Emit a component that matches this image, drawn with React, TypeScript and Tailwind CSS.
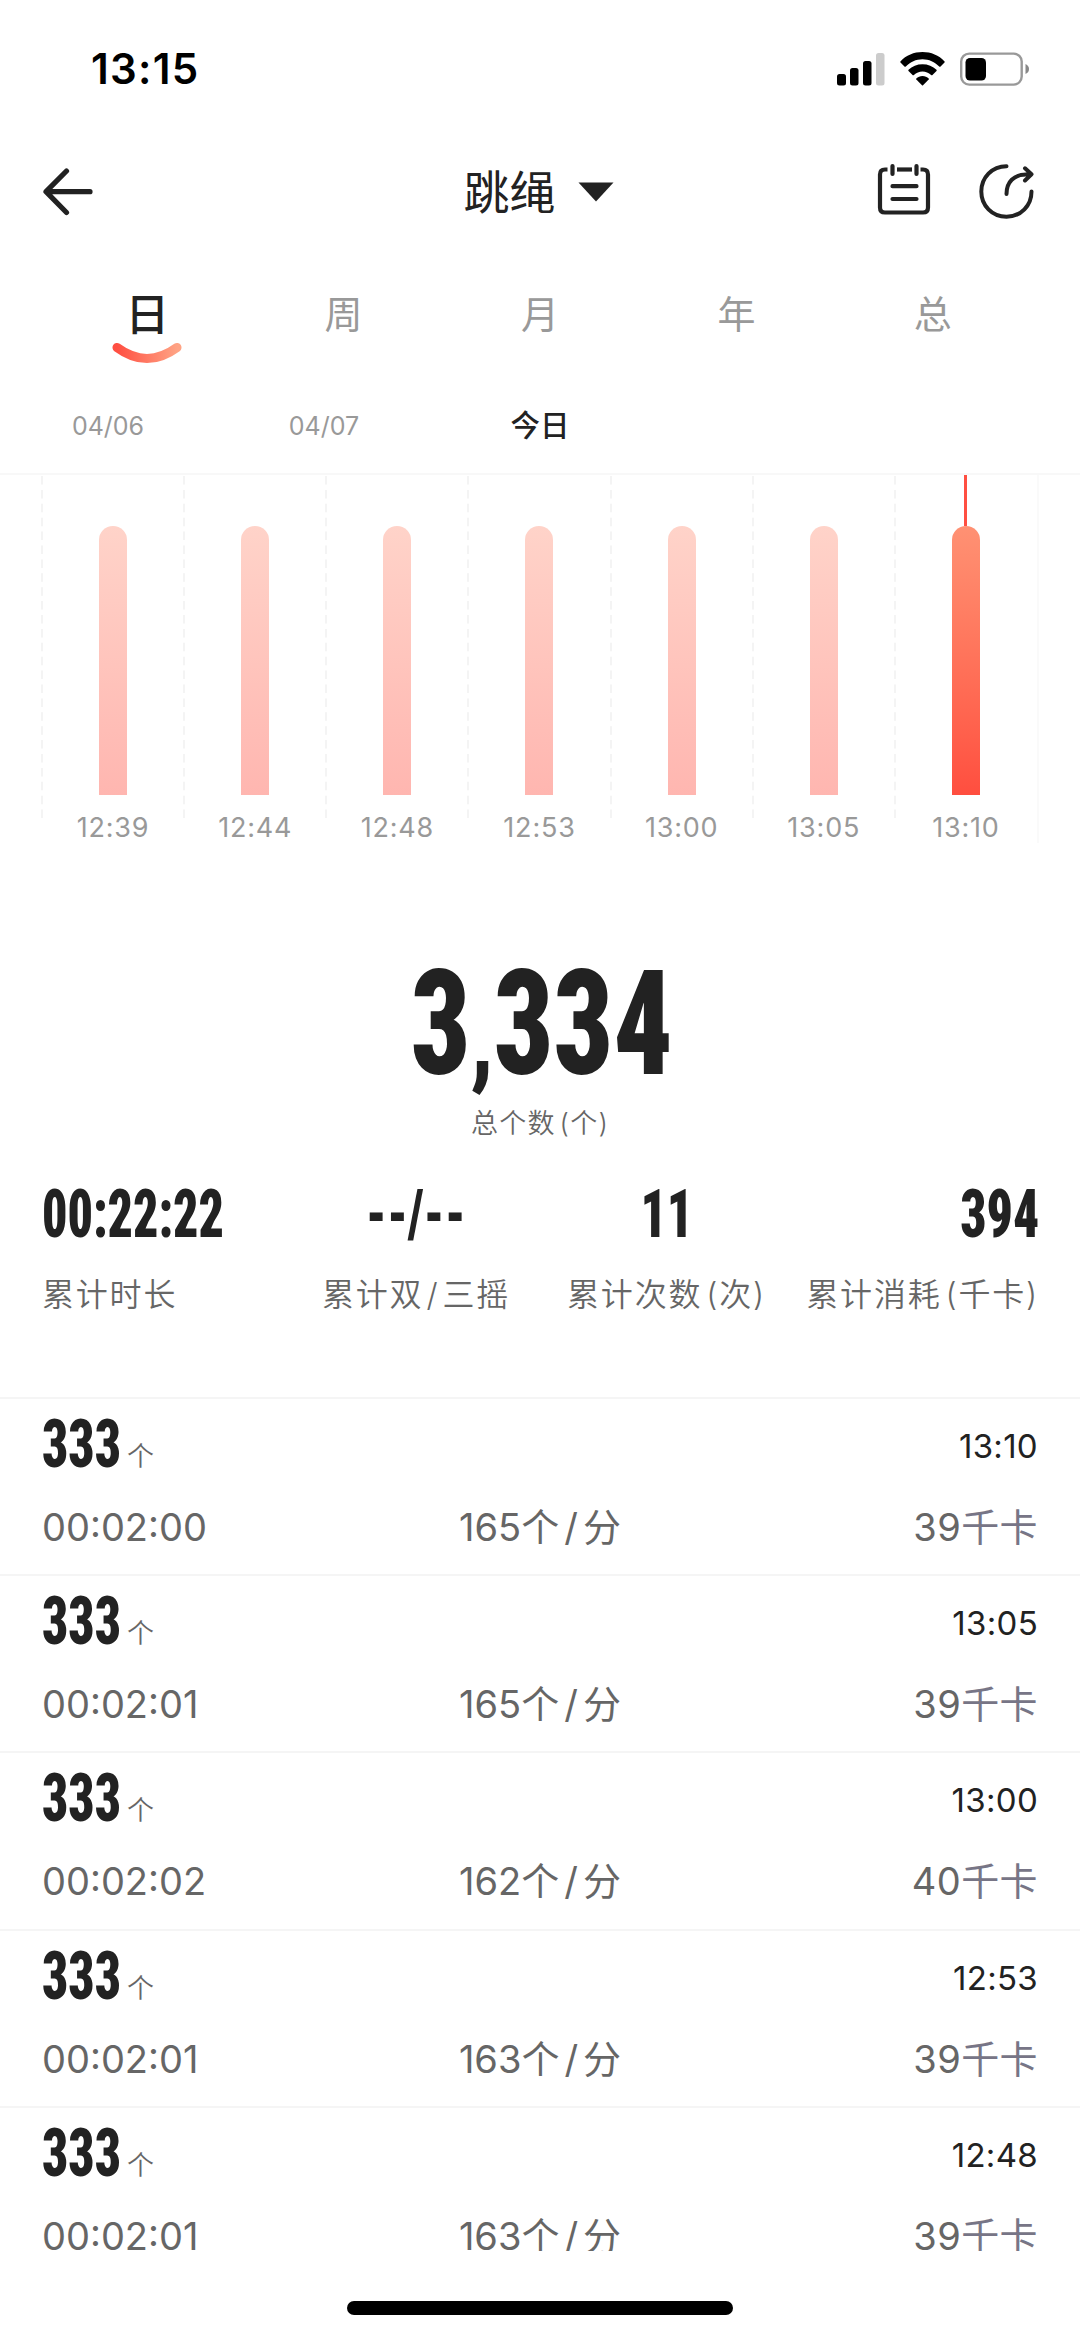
import type { ReactNode } from 'react';
import { clsx } from 'clsx';

const tabs = ['日', '周', '月', '年', '总'];
const dates = ['04/06', '04/07', '今日'];
const bars = ['12:39', '12:44', '12:48', '12:53', '13:00', '13:05', '13:10'];

const records = [
  { count: '333', time: '13:10', duration: '00:02:00', speed: '165', kcal: '39' },
  { count: '333', time: '13:05', duration: '00:02:01', speed: '165', kcal: '39' },
  { count: '333', time: '13:00', duration: '00:02:02', speed: '162', kcal: '40' },
  { count: '333', time: '12:53', duration: '00:02:01', speed: '163', kcal: '39' },
  { count: '333', time: '12:48', duration: '00:02:01', speed: '163', kcal: '39' },
];

const condensed = "font-['Roboto'] font-black [font-stretch:75%] whitespace-nowrap";

const StatusBar = () => (
  <div className="flex h-[138px] items-center justify-between pl-[91px] pr-[50px]">
    <span className="text-[42px] font-semibold leading-none tracking-[1.3px] text-black">13:15</span>
    <div className="flex h-[34px] items-center">
      <svg width="48" height="34" viewBox="0 0 48 34">
        <rect x="0" y="22" width="9" height="11.5" rx="2.5" />
        <rect x="13" y="16" width="8.5" height="17.5" rx="2.5" />
        <rect x="26" y="9" width="8.5" height="24.5" rx="2.5" />
        <rect x="39" y="1" width="8.5" height="32.5" rx="2.5" fill="#cccccc" />
      </svg>
      <svg className="ml-[15px]" width="45" height="34" viewBox="0 0 45 34">
        <path d="M22.5 0C31 0 39 3.3 44.6 9.4Q45 10 44.5 10.5L40.3 14.7Q39.7 15 39.2 14.6C34.7 10 29 7.3 22.5 7.3S10.3 10 5.8 14.6Q5.3 15 4.7 14.7L.5 10.5Q0 10 .4 9.4C6 3.3 14 0 22.5 0Z" />
        <path d="M22.5 12.2C28 12.2 32.8 14.2 36.5 17.8Q37 18.4 36.5 18.9L32.2 23.2Q31.6 23.5 31.1 23.1C28.6 20.8 25.8 19.6 22.5 19.6S16.4 20.8 13.9 23.1Q13.4 23.5 12.8 23.2L8.5 18.9Q8 18.4 8.5 17.8C12.2 14.2 17 12.2 22.5 12.2Z" />
        <path d="M22.5 24.1C25 24.1 27.1 25 28.7 26.5Q29.2 27 28.7 27.5L23 33.2Q22.5 33.6 22 33.2L16.3 27.5Q15.8 27 16.3 26.5C17.9 25 20 24.1 22.5 24.1Z" />
      </svg>
      <svg className="ml-[15px]" width="70" height="34" viewBox="0 0 70 34">
        <rect x="1.2" y="1.6" width="60.5" height="31" rx="8" fill="none" stroke="#999999" strokeWidth="2.4" />
        <rect x="5.5" y="6" width="20.5" height="22.5" rx="4.5" />
        <path d="M65.5 12C68 13 69 15 69 17S68 21 65.5 22Z" fill="#888888" />
      </svg>
    </div>
  </div>
);

const Header = () => (
  <div className="grid h-[108px] grid-cols-3 items-center pl-[42px] pr-[45px]">
    <svg width="52" height="48" viewBox="0 0 52 48" fill="none" stroke="#222222" strokeWidth="5.2" strokeLinecap="round" strokeLinejoin="round">
      <path d="M24.5 3L4 23.7L24.5 44.5M4.5 23.7H48" />
    </svg>
    <div className="flex items-center justify-center">
      <span className="text-[46px] leading-none text-[#222222]">跳绳</span>
      <svg className="ml-[22px]" width="36" height="20" viewBox="0 0 36 20">
        <path d="M.5 .5H35.5L18 19.5Z" fill="#222222" />
      </svg>
    </div>
    <div className="flex items-center justify-end">
      <svg className="mb-[6px]" width="54" height="56" viewBox="0 0 54 56" fill="none" stroke="#222222" strokeWidth="4.2" strokeLinecap="round" strokeLinejoin="round">
        <path d="M10.5 8.5H8Q3 8.5 3 13.5V46.5Q3 51.5 8 51.5H46Q51 51.5 51 46.5V13.5Q51 8.5 46 8.5H43.5" strokeLinecap="butt" />
        <path d="M20 8.5H35" strokeLinecap="butt" />
        <path d="M15.5 5V13M39.5 5V13M15.5 25.2H39.5M15.5 38H39.5" />
      </svg>
      <svg className="mb-[2px] ml-[47px]" width="57" height="58" viewBox="0 0 57 58" fill="none" stroke="#222222" strokeWidth="4" strokeLinecap="round" strokeLinejoin="round">
        <path d="M28.5 4.2C14 4.2 3.3 15.5 3.3 29.5S14 54.7 28.5 54.7S53.5 43.5 53.5 29.5" />
        <path d="M28.5 32C28.5 20 36 12.5 48 12.5H53M47 6.3L53.5 12.2L47 18.5" />
      </svg>
    </div>
  </div>
);

const Tabs = () => (
  <div className="flex h-[127px] px-[49px]">
    {tabs.map((tab, i) => (
      <div key={tab} className="flex flex-1 flex-col items-center pt-[44px]">
        <span
          className={clsx(
            'h-[50px]',
            i === 0 ? 'text-[44px] font-medium leading-[50px] text-[#222222]' : 'text-[38px] leading-[48px] text-[#999999]'
          )}
        >
          {tab}
        </span>
        {i === 0 && (
          <svg className="mt-[2px]" width="70" height="22" viewBox="0 0 70 22">
            <defs>
              <linearGradient id="smile" x1="0" x2="1" y1="0" y2="0">
                <stop offset="0" stopColor="#ff4f42" />
                <stop offset="1" stopColor="#ffa384" />
              </linearGradient>
            </defs>
            <path d="M5 5.5Q35 27.5 65 5.5" fill="none" stroke="url(#smile)" strokeWidth="9" strokeLinecap="round" />
          </svg>
        )}
      </div>
    ))}
  </div>
);

const Chart = () => (
  <div className="border-t-2 border-[#f8f8f8]">
    <div className="flex h-[368px] pl-[42px] pr-[41px]">
      {bars.map((label, i) => {
        const active = i === bars.length - 1;
        return (
          <div key={label} className={clsx('relative flex flex-1 flex-col items-center', active && 'border-r-2 border-[#fafafa]')}>
            <svg className="absolute -left-px top-px" width="2" height="342">
              <line x1="1" x2="1" y1="0" y2="342" stroke="#f4f4f4" strokeWidth="2" strokeDasharray="8.5 5.4" />
            </svg>
            <div className={clsx('h-[51px] w-[3px]', active && 'bg-[#ff4f42]')} />
            <div
              className={clsx(
                'h-[269px] w-[28px] rounded-t-full bg-linear-to-b',
                active ? 'from-[#ff9173] to-[#ff4e3f]' : 'from-[#ffd3c9] to-[#ffb6b0]'
              )}
            />
            <span className="mt-[19px] text-[27px] leading-[28px] tracking-[0.8px] text-[#999999]">{label}</span>
          </div>
        );
      })}
    </div>
  </div>
);

const Summary = () => (
  <div className="h-[554px] pt-[117px]">
    <div className="flex h-[130px] items-center justify-center pl-[4px]">
      <span className={clsx(condensed, 'scale-x-[0.8] text-[146px] leading-[130px] text-[#222222]')}>
        3<span className="text-[108px] leading-none">,</span>334
      </span>
    </div>
    <p className="mt-[18px] text-center text-[27px] font-[350] leading-[32px] tracking-[1.2px] text-[#666666]">
      总个数<span className="ml-[4px]">(</span>个)
    </p>
    <div className="mt-[45px] flex px-[42px] text-[32px] tracking-[1.8px]">
      <Stat className="w-[240px] items-start" num="origin-left scale-x-[0.755]" value="00:22:22">
        累计时长
      </Stat>
      <Stat className="w-[268px] items-center" num="scale-x-[0.76]" value="--/--">
        累计双<span className="mx-[3px]">/</span>三摇
      </Stat>
      <Stat className="w-[233px] items-center" num="scale-x-[0.78]" value="11">
        累计次数<span className="ml-[4px]">(</span>次)
      </Stat>
      <Stat className="w-[256px] items-end" num="origin-right scale-x-[0.78]" value="394">
        累计消耗<span className="ml-[4px]">(</span>千卡)
      </Stat>
    </div>
  </div>
);

type StatProps = { className: string; num: string; value: string; children: ReactNode };

const Stat = ({ className, num, value, children }: StatProps) => (
  <div className={clsx('flex shrink-0 flex-col', className)}>
    <span className={clsx(condensed, 'text-[66px] leading-[60px] tracking-normal text-[#222222]', num)}>{value}</span>
    <span className="mt-[28px] whitespace-nowrap font-[350] leading-[44px] text-[#666666]">{children}</span>
  </div>
);

const RecordRow = ({ record }: { record: (typeof records)[number] }) => (
  <div className="h-[177.2px] shrink-0 border-t-2 border-[#f5f5f5] px-[42px]">
    <div className="flex h-[88px] items-center justify-between pt-[4px]">
      <div className="flex items-center">
        <span className="w-[85px]">
          <span className={clsx(condensed, 'inline-block origin-left scale-x-[0.78] text-[66px] leading-[60px] text-[#222222]')}>
            {record.count}
          </span>
        </span>
        <span className="pt-[23px] text-[27px] font-[350] leading-none text-[#666666]">个</span>
      </div>
      <span className="pt-[3px] text-[33px] leading-none tracking-[0.3px] text-[#222222]">{record.time}</span>
    </div>
    <div className="grid grid-cols-3 pt-[18px] text-[38px] leading-[44px] text-[#666666]">
      <span>{record.duration}</span>
      <span className="text-center">
        {record.speed}个<span className="mx-[5px]">/</span>分
      </span>
      <span className="text-right tracking-[0.4px]">
        {record.kcal}
        <span className="text-[#777586]">千卡</span>
      </span>
    </div>
  </div>
);

export default function App() {
  return (
    <div className="flex h-[2337px] w-[1080px] flex-col overflow-hidden bg-white font-['Inter','Noto_Sans_CJK_SC',sans-serif]">
      <StatusBar />
      <Header />
      <Tabs />
      <div className="flex h-[100px] items-center pt-[6px]">
        {dates.map((date, i) => (
          <span
            key={date}
            className={clsx(
              'w-[216px] text-center leading-none',
              i === 2 ? 'text-[29.5px] font-medium text-[#222222]' : 'text-[25px] text-[#999999]'
            )}
          >
            {date}
          </span>
        ))}
      </div>
      <Chart />
      <Summary />
      <div className="flex h-[854px] shrink-0 flex-col overflow-hidden">
        {records.map((record) => (
          <RecordRow key={record.time} record={record} />
        ))}
      </div>
      <div className="flex flex-1 justify-center pt-[50px]">
        <div className="h-[14px] w-[386px] rounded-full bg-black" />
      </div>
    </div>
  );
}
